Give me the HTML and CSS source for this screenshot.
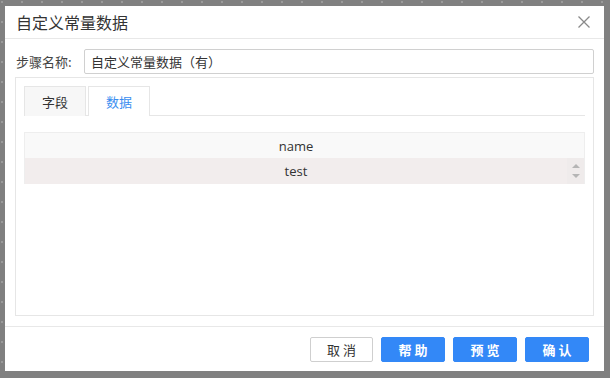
FILE: index.html
```html
<!DOCTYPE html>
<html>
<head>
<meta charset="utf-8">
<link rel="stylesheet" href="styles.css">
</head>
<body>
<div class="dialog">
  <div class="dlg-title">
    <span class="title-text">自定义常量数据</span>
    <svg class="close" width="12" height="12" viewBox="0 0 12 12"><path d="M0.5 0.5L11.5 11.5M11.5 0.5L0.5 11.5" stroke="#8a8a8a" stroke-width="1.3" fill="none"/></svg>
  </div>
  <div class="dlg-body">
    <div class="step-row">
      <label class="step-label">步骤名称:</label>
      <div class="step-input">自定义常量数据（有）</div>
    </div>
    <div class="panel">
      <div class="tabs">
        <div class="tab">字段</div>
        <div class="tab active">数据</div>
      </div>
      <div class="grid">
        <div class="grid-head">name</div>
        <div class="grid-row">
          <div class="cell">test</div>
          <div class="spin">
            <svg width="8" height="18" viewBox="0 0 8 18"><path d="M4 2L8 6H0Z" fill="#b5b5b5"/><path d="M0 12H8L4 16Z" fill="#b5b5b5"/></svg>
          </div>
        </div>
      </div>
    </div>
  </div>
  <div class="dlg-foot">
    <button class="btn plain">取 消</button>
    <button class="btn primary">帮 助</button>
    <button class="btn primary">预 览</button>
    <button class="btn primary">确 认</button>
  </div>
</div>
</body>
</html>
```

FILE: styles.css
```css
html, body {
  margin: 0;
  padding: 0;
}
body {
  width: 610px;
  height: 378px;
  box-sizing: border-box;
  padding: 6px 0 0 5px;
  background-color: #808080;
  background-image: radial-gradient(circle, #9a9a9a 0.8px, transparent 1px);
  background-size: 20px 20px;
  background-position: -8px -8px;
  font-family: "Noto Sans CJK SC", "Open Sans", sans-serif;
  overflow: hidden;
}
.dialog {
  width: 599px;
  height: 365px;
  background: #fff;
  display: flex;
  flex-direction: column;
  box-sizing: border-box;
}
.dlg-title {
  height: 32px;
  border-bottom: 1px solid #e8e8e8;
  display: flex;
  align-items: center;
  justify-content: space-between;
  padding: 0 14px 0 11px;
  flex-shrink: 0;
}
.title-text {
  font-size: 16px;
  color: #333;
  line-height: 20px;
}
.close {
  display: block;
}
.dlg-body {
  flex: 1;
  display: flex;
  flex-direction: column;
  padding: 10px 10px 10px 10px;
  min-height: 0;
}
.step-row {
  display: flex;
  align-items: center;
  height: 25px;
}
.step-label {
  font-size: 13px;
  color: #444;
  width: 68px;
  padding-left: 1px;
}
.step-input {
  flex: 1;
  height: 25px;
  box-sizing: border-box;
  border: 1px solid #d0d0d0;
  border-radius: 2px;
  font-size: 13px;
  color: #333;
  line-height: 23px;
  padding-left: 6px;
}
.panel {
  flex: 1;
  margin-top: 3px;
  border: 1px solid #e6e6e6;
  padding: 8px;
  display: flex;
  flex-direction: column;
}
.tabs {
  display: flex;
  gap: 2px;
  border-bottom: 1px solid #e6e6e6;
  height: 29px;
}
.tab {
  width: 62px;
  height: 30px;
  box-sizing: border-box;
  border: 1px solid #e6e6e6;
  border-bottom: none;
  background: #f7f7f7;
  font-size: 13px;
  color: #333;
  display: flex;
  align-items: center;
  justify-content: center;
}
.tab.active {
  background: #fff;
  color: #3a8ef0;
  height: 30px;
}
.grid {
  margin-top: 16px;
  border: 1px solid #eeeeee;
  border-bottom: none;
}
.grid-head {
  height: 25px;
  background: #f9f9f9;
  font-family: "Open Sans", sans-serif;
  font-size: 13px;
  font-weight: 500;
  color: #333;
  display: flex;
  align-items: center;
  justify-content: center;
  padding-right: 17px;
}
.grid-row {
  display: flex;
  height: 26px;
  background: #f2eded;
}
.cell {
  flex: 1;
  display: flex;
  align-items: center;
  justify-content: center;
  font-family: "Open Sans", sans-serif;
  font-size: 13px;
  color: #333;
}
.spin {
  width: 17px;
  display: flex;
  align-items: center;
  justify-content: center;
  background: #efebeb;
}
.spin svg {
  display: block;
}
.dlg-foot {
  flex-shrink: 0;
  border-top: 1px solid #e8e8e8;
  padding: 10px 15px 9px 0;
  display: flex;
  justify-content: flex-end;
  gap: 8px;
}
.btn {
  width: 64px;
  height: 25px;
  box-sizing: border-box;
  border-radius: 2px;
  font-family: "Noto Sans CJK SC", sans-serif;
  font-size: 13px;
  font-weight: 700;
  padding: 0;
  margin: 0;
  display: flex;
  align-items: center;
  justify-content: center;
  cursor: pointer;
}
.btn.plain {
  width: 63px;
  background: #fff;
  border: 1px solid #cfcfcf;
  color: #333;
  font-weight: 400;
}
.btn.primary {
  background: #3388f7;
  border: 1px solid #3388f7;
  color: #fff;
}
```
